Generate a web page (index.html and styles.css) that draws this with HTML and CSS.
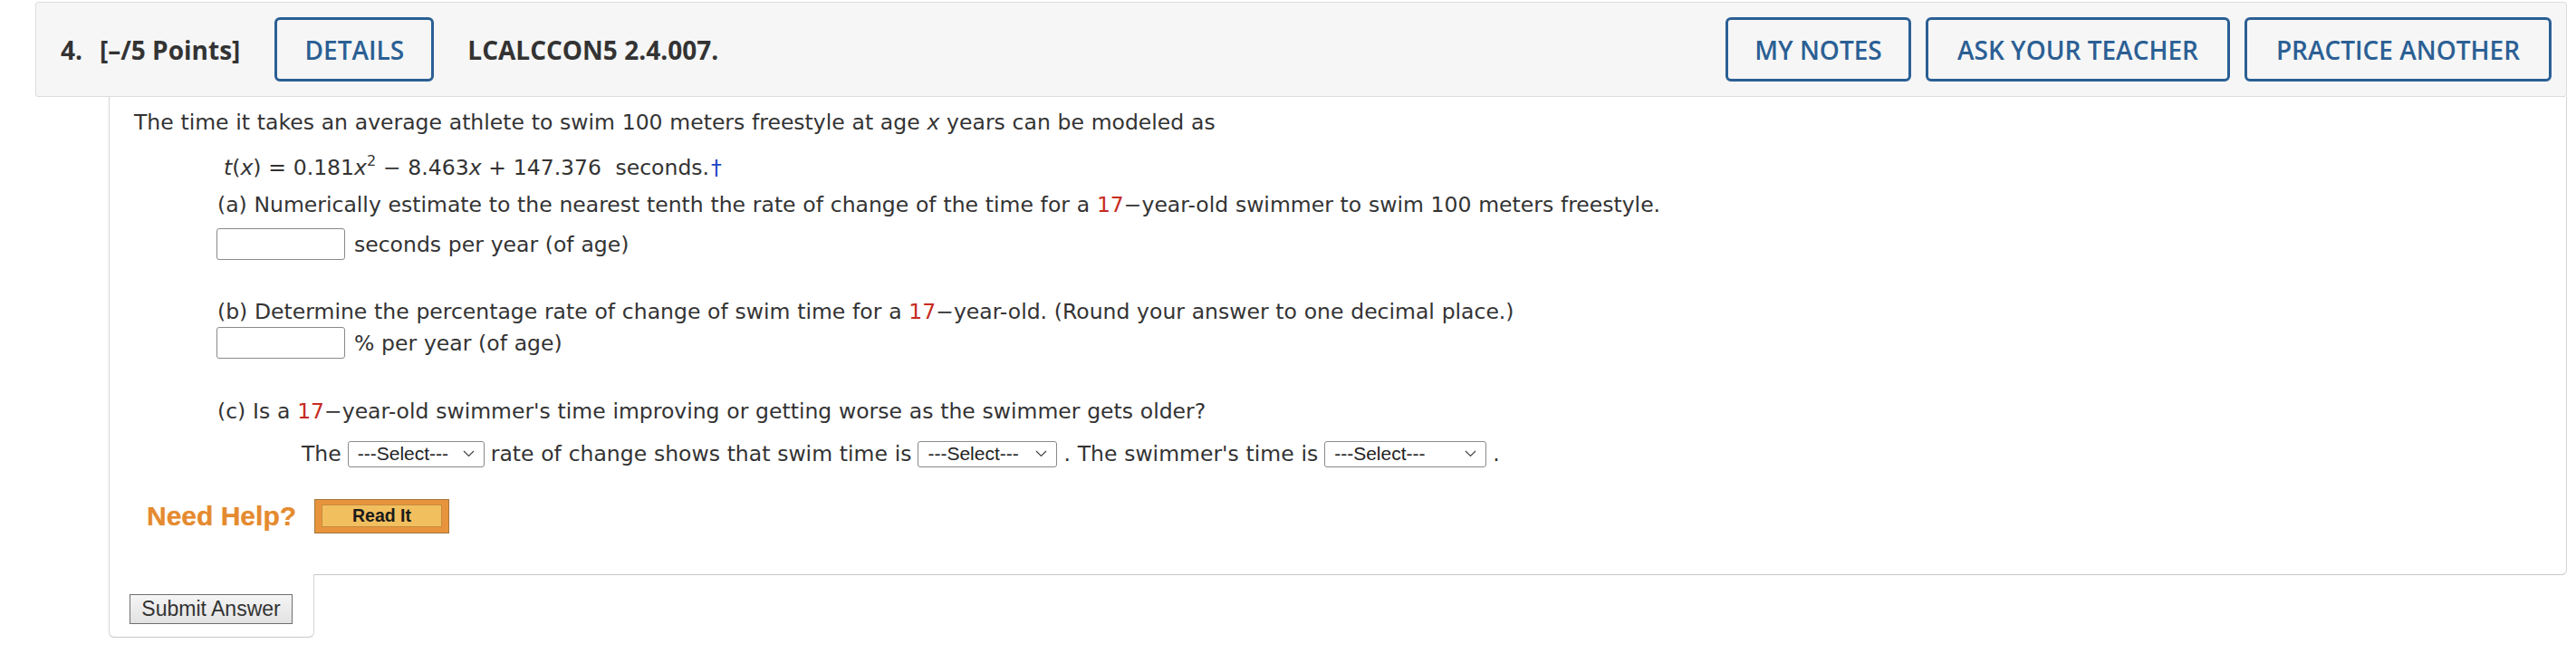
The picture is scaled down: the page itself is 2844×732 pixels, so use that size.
FILE: index.html
```html
<!DOCTYPE html>
<html lang="en">
<head>
<meta charset="utf-8">
<title>Question 4</title>
<link rel="stylesheet" href="styles.css">
</head>
<body>
<div class="page">
  <div class="qhead">
    <span class="qnum">4.</span>
    <span class="qpts">[–/5 Points]</span>
    <span class="hbtn details">DETAILS</span>
    <span class="qcode">LCALCCON5 2.4.007.</span>
    <div class="hright">
      <span class="hbtn b-notes">MY NOTES</span>
      <span class="hbtn b-ask">ASK YOUR TEACHER</span>
      <span class="hbtn b-practice">PRACTICE ANOTHER</span>
    </div>
  </div>
  <div class="qbody">
    <p class="line intro">The time it takes an average athlete to swim 100 meters freestyle at age <i>x</i> years can be modeled as</p>
    <p class="line formula"><i>t</i>(<i>x</i>) = 0.181<i>x</i><sup>2</sup> − 8.463<i>x</i> + 147.376&nbsp; seconds.<span class="dagger">†</span></p>
    <p class="line part pa">(a) Numerically estimate to the nearest tenth the rate of change of the time for a <span class="red">17</span>−year-old swimmer to swim 100 meters freestyle.</p>
    <div class="ansrow">
      <span class="inp"></span>
      <span class="unit">seconds per year (of age)</span>
    </div>
    <p class="line part pb">(b) Determine the percentage rate of change of swim time for a <span class="red">17</span>−year-old. (Round your answer to one decimal place.)</p>
    <div class="ansrow rowb">
      <span class="inp"></span>
      <span class="unit">% per year (of age)</span>
    </div>
    <p class="line part pc">(c) Is a <span class="red">17</span>−year-old swimmer's time improving or getting worse as the swimmer gets older?</p>
    <div class="selrow">
      <span>The</span>
      <span class="sel w1"><span class="seltext">---Select---</span><svg class="chev" width="13" height="8" viewBox="0 0 13 8"><path d="M1 1 L6.5 6.5 L12 1" fill="none" stroke="#444" stroke-width="1.2"/></svg></span>
      <span>rate of change shows that swim time is</span>
      <span class="sel w2"><span class="seltext">---Select---</span><svg class="chev" width="13" height="8" viewBox="0 0 13 8"><path d="M1 1 L6.5 6.5 L12 1" fill="none" stroke="#444" stroke-width="1.2"/></svg></span>
      <span>. The swimmer's time is</span>
      <span class="sel w3"><span class="seltext">---Select---</span><svg class="chev" width="13" height="8" viewBox="0 0 13 8"><path d="M1 1 L6.5 6.5 L12 1" fill="none" stroke="#444" stroke-width="1.2"/></svg></span>
      <span>.</span>
    </div>
    <div class="help">
      <span class="needhelp">Need Help?</span>
      <span class="readit"><span class="readit-in">Read It</span></span>
    </div>
  </div>
  <div class="submittab">
    <span class="submit">Submit Answer</span>
  </div>
</div>
</body>
</html>
```
FILE: styles.css
```css
html, body {
  margin: 0;
  padding: 0;
  background: #ffffff;
}

.page {
  padding: 2px 10px 0 39px;
}

.qhead {
  display: flex;
  align-items: center;
  height: 103px;
  padding: 0 16px 0 27px;
  background: #f6f6f6;
  border: 1px solid #dcdcdc;
  border-radius: 3px;
  font-family: "Open Sans", sans-serif;
  color: #333333;
}

.qnum {
  font-weight: 700;
  font-size: 28px;
  margin-right: 19px;
}

.qpts {
  font-weight: 700;
  font-size: 28px;
  margin-right: 38px;
}

.qcode {
  font-weight: 700;
  font-size: 28px;
  margin-left: 37px;
}

.hbtn {
  display: inline-flex;
  align-items: center;
  justify-content: center;
  box-sizing: border-box;
  height: 71px;
  padding: 0 31px;
  border: 3px solid #2b5f94;
  border-radius: 6px;
  color: #2b5f94;
  font-weight: 600;
  font-size: 28px;
  background: #f6f6f6;
}

.details { width: 176px; padding: 0; }
.b-notes { width: 205px; padding: 0; }
.b-ask { width: 336px; padding: 0; }
.b-practice { width: 339px; padding: 0; }

.hright {
  margin-left: auto;
  display: flex;
  gap: 16px;
}

.qbody {
  margin-left: 81px;
  padding: 13px 0 45px 27px;
  border-left: 1px solid #d4d4d4;
  border-right: 1px solid #d4d4d4;
  border-bottom: 1px solid #c8c8c8;
  border-bottom-right-radius: 6px;
  font-family: "DejaVu Sans", Verdana, sans-serif;
  font-size: 23.5px;
  word-spacing: 0.3px;
  color: #333333;
}

.line {
  margin: 0;
  line-height: 30px;
}

.formula {
  margin: 20px 0 0 99px;
}

.formula sup {
  font-size: 16px;
  line-height: 0;
  vertical-align: 10px;
}

.dagger {
  color: #2142c4;
  margin-left: 2px;
}

.part {
  margin-left: 92px;
}

.pa {
  margin-top: 11px;
}

.pb {
  margin-top: 42px;
}

.pc {
  margin-top: 43px;
}

.red {
  color: #c62b20;
}

.ansrow {
  display: flex;
  align-items: center;
  gap: 10px;
  margin: 11px 0 0 91px;
  line-height: 30px;
}

.rowb {
  margin-top: 2px;
}

.inp {
  display: block;
  box-sizing: border-box;
  width: 142px;
  height: 35px;
  border: 1px solid #8a8a8a;
  border-radius: 3px;
  background: #ffffff;
}

.selrow {
  display: flex;
  align-items: center;
  gap: 7px;
  margin: 17px 0 0 185px;
  line-height: 30px;
}

.sel {
  display: inline-flex;
  align-items: center;
  justify-content: space-between;
  box-sizing: border-box;
  height: 29px;
  padding: 0 10px 0 10px;
  border: 1px solid #8a8a8a;
  border-radius: 3px;
  font-family: "Liberation Sans", Arial, sans-serif;
  font-size: 21px;
  word-spacing: 0;
  color: #222222;
}

.w1 { width: 151px; }
.w2 { width: 154px; }
.w3 { width: 179px; }

.chev {
  display: block;
  flex: none;
}

.help {
  display: flex;
  align-items: center;
  margin: 35px 0 0 14px;
  height: 38px;
}

.needhelp {
  font-family: "Liberation Sans", Arial, sans-serif;
  font-weight: 700;
  font-size: 30px;
  word-spacing: 0;
  color: #e58a2f;
  text-shadow: 0 0 1px rgba(229, 138, 47, 0.6);
  margin-right: 20px;
}

.readit {
  display: flex;
  box-sizing: border-box;
  width: 149px;
  height: 38px;
  padding: 5px 7px 6px 7px;
  background: #e8943c;
  border: 1px solid #a4773d;
}

.readit-in {
  flex: 1;
  display: flex;
  align-items: center;
  justify-content: center;
  background: #f2bf5f;
  border: 1px solid #c58b40;
  font-family: "Liberation Sans", Arial, sans-serif;
  font-weight: 700;
  font-size: 19.5px;
  word-spacing: 0;
  color: #1a1a1a;
}

.submittab {
  margin: -1px 0 0 81px;
  width: 227px;
  box-sizing: border-box;
  padding: 22px 0 14px 22px;
  background: #ffffff;
  border-left: 1px solid #d4d4d4;
  border-right: 1px solid #d4d4d4;
  border-bottom: 1px solid #c8c8c8;
  border-bottom-left-radius: 6px;
  border-bottom-right-radius: 6px;
}

.submit {
  display: inline-flex;
  align-items: center;
  justify-content: center;
  box-sizing: border-box;
  width: 180px;
  height: 33px;
  border: 1px solid #707070;
  background: linear-gradient(#f5f5f5, #e2e2e2);
  font-family: "Liberation Sans", Arial, sans-serif;
  font-size: 23px;
  color: #333333;
}
```
